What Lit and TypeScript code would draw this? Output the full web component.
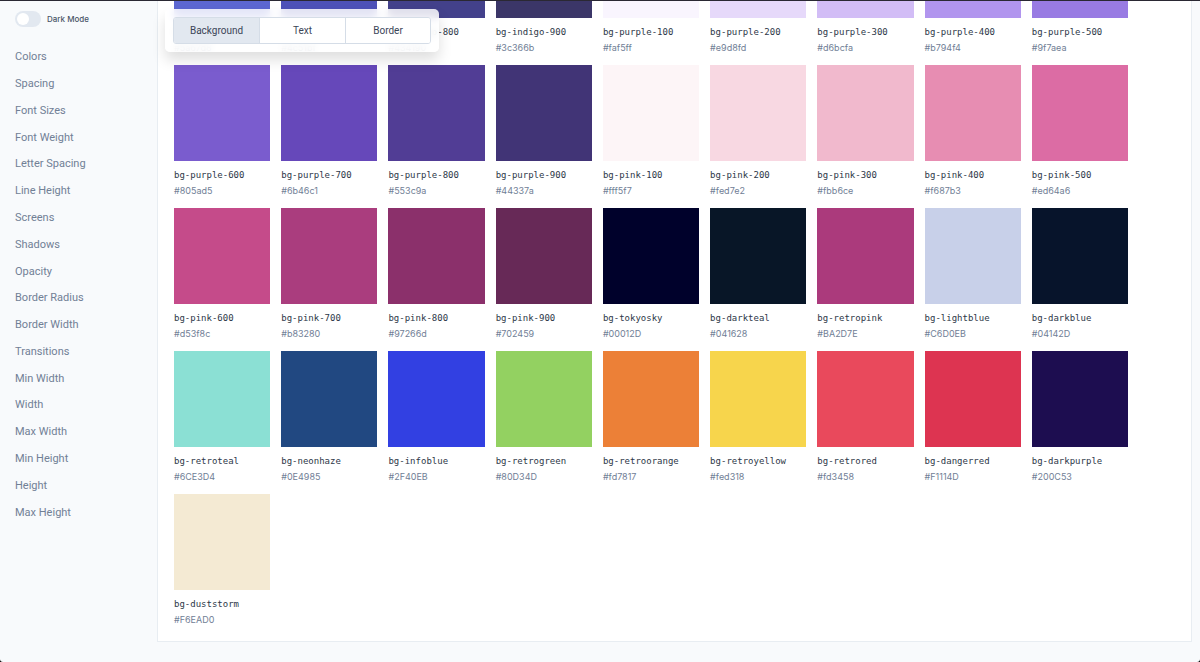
import { LitElement, html, css } from "lit";
import { customElement, state } from "lit/decorators.js";
import { styleMap } from "lit/directives/style-map.js";

const SECTIONS = [
  "Colors", "Spacing", "Font Sizes", "Font Weight", "Letter Spacing", "Line Height",
  "Screens", "Shadows", "Opacity", "Border Radius", "Border Width", "Transitions",
  "Min Width", "Width", "Max Width", "Min Height", "Height", "Max Height",
];

const MODES = ["Background", "Text", "Border"];

const COLORS: [string, string][] = [
  ["indigo-600", "#5a67d8"], ["indigo-700", "#4c51bf"], ["indigo-800", "#434190"],
  ["indigo-900", "#3c366b"], ["purple-100", "#faf5ff"], ["purple-200", "#e9d8fd"],
  ["purple-300", "#d6bcfa"], ["purple-400", "#b794f4"], ["purple-500", "#9f7aea"],
  ["purple-600", "#805ad5"], ["purple-700", "#6b46c1"], ["purple-800", "#553c9a"],
  ["purple-900", "#44337a"], ["pink-100", "#fff5f7"], ["pink-200", "#fed7e2"],
  ["pink-300", "#fbb6ce"], ["pink-400", "#f687b3"], ["pink-500", "#ed64a6"],
  ["pink-600", "#d53f8c"], ["pink-700", "#b83280"], ["pink-800", "#97266d"],
  ["pink-900", "#702459"], ["tokyosky", "#00012D"], ["darkteal", "#041628"],
  ["retropink", "#BA2D7E"], ["lightblue", "#C6D0EB"], ["darkblue", "#04142D"],
  ["retroteal", "#6CE3D4"], ["neonhaze", "#0E4985"], ["infoblue", "#2F40EB"],
  ["retrogreen", "#80D34D"], ["retroorange", "#fd7817"], ["retroyellow", "#fed318"],
  ["retrored", "#fd3458"], ["dangerred", "#F1114D"], ["darkpurple", "#200C53"],
  ["duststorm", "#F6EAD0"],
];

// Linear sRGB to linear Display P3.
const TO_P3 = [
  [0.8225, 0.1775, 0],
  [0.0332, 0.9668, 0],
  [0.0171, 0.0724, 0.9105],
];

const decode = (v: number) => (v <= 0.04045 ? v / 12.92 : ((v + 0.055) / 1.055) ** 2.4);
const encode = (v: number) => (v <= 0.0031308 ? v * 12.92 : 1.055 * v ** (1 / 2.4) - 0.055);

/** Channel values of a hex colour as a wide-gamut panel shows them. */
function panelColor(hex: string): string {
  const lin = [1, 3, 5].map((i) => decode(parseInt(hex.slice(i, i + 2), 16) / 255));
  const out = TO_P3.map((row) =>
    Math.round(255 * encode(row[0] * lin[0] + row[1] * lin[1] + row[2] * lin[2]))
  );
  return `rgb(${out.join(", ")})`;
}

@customElement("color-swatch")
class ColorSwatch extends LitElement {
  static properties = { name: {}, value: {} };
  declare name: string;
  declare value: string;

  static styles = css`
    :host { display: block; min-width: 0; white-space: nowrap; }
    .chip { height: 96px; margin-bottom: 7px; }
    .name {
      font: 9px/15px "DejaVu Sans Mono", monospace;
      color: #2d3748;
    }
    .value { font-size: 9px; line-height: 15px; color: #718096; }
  `;

  render() {
    return html`
      <div class="chip" style=${styleMap({ backgroundColor: panelColor(this.value) })}></div>
      <div class="name">bg-${this.name}</div>
      <div class="value">${this.value}</div>
    `;
  }
}

@customElement("app-root")
class AppRoot extends LitElement {
  @state() private mode = "Background";

  static styles = css`
    :host {
      display: block;
      background: #000;
      font-family: Inter, "Liberation Sans", sans-serif;
    }
    * { box-sizing: border-box; }
    .page {
      display: flex;
      height: 100vh;
      overflow: hidden;
      border-top: 1px solid #2a2833;
      border-radius: 0 0 3px 3px;
      background: #f8fafc;
    }
    .sidebar { flex: none; width: 157px; padding: 9px 15px; }
    .switch {
      display: flex;
      align-items: center;
      gap: 6px;
      height: 17px;
      font-size: 8px;
      font-weight: 500;
      color: #4a5568;
    }
    .switch input {
      appearance: none;
      display: flex;
      align-items: center;
      width: 26px;
      height: 16px;
      margin: 0;
      padding: 2px;
      border-radius: 8px;
      background: #e2e8f0;
    }
    .switch input::before {
      content: "";
      width: 12px;
      height: 12px;
      border-radius: 50%;
      background: #fff;
    }
    .switch input:checked { justify-content: flex-end; background: #718096; }
    .nav {
      display: grid;
      grid-auto-rows: 1fr;
      align-items: center;
      min-height: 482px;
      margin-top: 17px;
    }
    .nav a {
      font: 11px/16px Roboto, "Liberation Sans", sans-serif;
      color: #718096;
      text-decoration: none;
      white-space: nowrap;
    }
    .content {
      position: relative;
      flex: 1;
      min-width: 0;
      display: flex;
      flex-direction: column;
      justify-content: flex-end;
      padding: 0 8px 20px 0;
    }
    .panel {
      padding: 14px 63px 4px 16px;
      border: 1px solid #e8edf2;
      background: #fff;
    }
    .grid {
      display: grid;
      grid-template-columns: repeat(auto-fill, minmax(90px, 1fr));
      gap: 10px 11px;
      padding-bottom: 10px;
    }
    .toolbar {
      position: absolute;
      top: 8px;
      left: 8px;
      padding: 8px;
      border-radius: 5px;
      background: rgba(255, 255, 255, 0.84);
      backdrop-filter: blur(4px);
      box-shadow: 0 8px 14px rgba(0, 0, 0, 0.13);
    }
    .segments {
      display: flex;
      border: 1px solid #d5dde7;
      border-radius: 3px;
      overflow: hidden;
    }
    .segments button {
      width: 85px;
      height: 25px;
      padding: 0;
      border: 0;
      background: #fff;
      font: 10px/15px Roboto, "Liberation Sans", sans-serif;
      color: #3b4557;
    }
    .segments button + button { border-left: 1px solid #d5dde7; }
    .segments button:nth-child(2) { width: 86px; }
    .segments .active { background: #e2e8f0; }
  `;

  render() {
    return html`
      <div class="page">
        <aside class="sidebar">
          <label class="switch"><input type="checkbox" />Dark Mode</label>
          <nav class="nav">
            ${SECTIONS.map((s) => html`<a href="#${s.toLowerCase().replace(" ", "-")}">${s}</a>`)}
          </nav>
        </aside>
        <main class="content">
          <section class="panel">
            <div class="grid">
              ${COLORS.map(([n, v]) => html`<color-swatch .name=${n} .value=${v}></color-swatch>`)}
            </div>
          </section>
          <div class="toolbar">
            <div class="segments">
              ${MODES.map(
                (m) => html`<button
                  type="button"
                  class=${m === this.mode ? "active" : ""}
                  @click=${() => (this.mode = m)}
                >${m}</button>`
              )}
            </div>
          </div>
        </main>
      </div>
    `;
  }
}
